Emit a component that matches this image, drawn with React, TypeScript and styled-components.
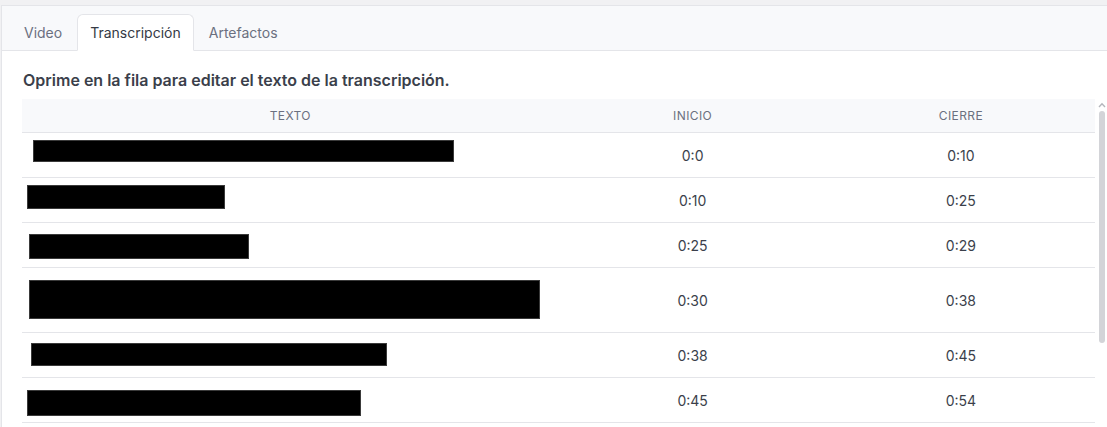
import React from 'react';
import styled, { createGlobalStyle } from 'styled-components';

const GlobalStyle = createGlobalStyle`
  html, body {
    margin: 0;
    padding: 0;
    background: #f1f1f3;
    font-family: Inter, "Noto Sans", "Liberation Sans", sans-serif;
    overflow: hidden;
  }
`;

interface Segment {
  start: string;
  end: string;
  bar: { x: number; y: number; w: number; h: number };
  tall?: boolean;
}

const segments: Segment[] = [
  { start: '0:0', end: '0:10', bar: { x: 11, y: 7, w: 421, h: 22 } },
  { start: '0:10', end: '0:25', bar: { x: 5, y: 7, w: 198, h: 24 } },
  { start: '0:25', end: '0:29', bar: { x: 7, y: 11, w: 220, h: 25 } },
  { start: '0:30', end: '0:38', bar: { x: 7, y: 12, w: 511, h: 39 }, tall: true },
  { start: '0:38', end: '0:45', bar: { x: 9, y: 10, w: 356, h: 23 } },
  { start: '0:45', end: '0:54', bar: { x: 5, y: 12, w: 334, h: 26 } },
];

const Card = styled.div`
  margin: 5px 0 0 1px;
  border-top: 1px solid #e4e5e9;
  border-left: 1px solid #e4e5e9;
  background: #ffffff;
  height: calc(100vh - 6px);
  display: flex;
  flex-direction: column;
`;

const TabBar = styled.div`
  display: flex;
  gap: 2px;
  padding: 8px 9px 0;
  background: #f8f9fb;
  border-bottom: 1px solid #e4e5e9;
`;

const Tab = styled.button<{ $active?: boolean }>`
  height: 37px;
  margin-bottom: -1px;
  padding: 0 12px;
  font-family: inherit;
  font-size: 14px;
  color: ${({ $active }) => ($active ? '#353a45' : '#6b7080')};
  background: ${({ $active }) => ($active ? '#ffffff' : 'transparent')};
  border: 1px solid ${({ $active }) => ($active ? '#e4e5e9' : 'transparent')};
  border-bottom-color: ${({ $active }) => ($active ? '#ffffff' : 'transparent')};
  border-radius: 6px 6px 0 0;
  cursor: pointer;
`;

const Body = styled.div`
  flex: 1;
  min-height: 0;
  padding: 19px 0 0 20px;
  display: flex;
  flex-direction: column;
`;

const Heading = styled.h2`
  margin: 0 0 8px 1px;
  font-size: 16px;
  line-height: 21px;
  font-weight: 600;
  color: #3b3f4b;
`;

const Scroller = styled.div`
  flex: 1;
  min-height: 0;
  display: flex;
  overflow: hidden;
`;

const TableWrap = styled.div`
  flex: 1;
  min-width: 0;
`;

const ScrollTrack = styled.div`
  width: 12px;
  flex-shrink: 0;
  display: flex;
  flex-direction: column;
  align-items: center;
  padding-top: 3px;
  gap: 3px;
`;

const Thumb = styled.div<{ $h: number }>`
  width: 6px;
  height: ${({ $h }) => $h}px;
  margin-left: 2px;
  border-radius: 3px;
  background: #d3d4d8;
`;

const Table = styled.table`
  width: 100%;
  border-collapse: collapse;
  table-layout: fixed;
`;

const HeadCell = styled.th<{ $w: string }>`
  width: ${({ $w }) => $w};
  height: 33px;
  padding: 0;
  background: #f8f9fb;
  border-bottom: 1px solid #e4e5e9;
  font-size: 12px;
  font-weight: 400;
  letter-spacing: 0.4px;
  color: #6b7080;
  text-transform: uppercase;
  text-align: center;
`;

const Row = styled.tr<{ $tall?: boolean }>`
  height: ${({ $tall }) => ($tall ? '65px' : '45px')};
  border-bottom: 1px solid #e4e5e9;
  cursor: pointer;

  &:hover {
    background: #fafafb;
  }
`;

const TextCell = styled.td`
  padding: 0;
  vertical-align: top;
`;

const TimeCell = styled.td`
  padding: 0;
  text-align: center;
  vertical-align: middle;
  font-size: 14px;
  color: #3b3f4b;
`;

const Redacted = styled.span`
  display: block;
  background: #000000;
  border: 1px solid #3a3a3a;
  box-sizing: border-box;
`;

export default function App() {
  return (
    <>
      <GlobalStyle />
      <Card>
        <TabBar>
          <Tab>Video</Tab>
          <Tab $active>Transcripción</Tab>
          <Tab>Artefactos</Tab>
        </TabBar>
        <Body>
          <Heading>Oprime en la fila para editar el texto de la transcripción.</Heading>
          <Scroller>
            <TableWrap>
              <Table>
                <thead>
                  <tr>
                    <HeadCell $w="50%">Texto</HeadCell>
                    <HeadCell $w="25%">Inicio</HeadCell>
                    <HeadCell $w="25%">Cierre</HeadCell>
                  </tr>
                </thead>
                <tbody>
                  {segments.map((s, i) => (
                    <Row key={i} $tall={s.tall}>
                      <TextCell>
                        <Redacted
                          style={{
                            marginLeft: s.bar.x,
                            marginTop: s.bar.y,
                            width: s.bar.w,
                            height: s.bar.h,
                          }}
                        />
                      </TextCell>
                      <TimeCell>{s.start}</TimeCell>
                      <TimeCell>{s.end}</TimeCell>
                    </Row>
                  ))}
                </tbody>
              </Table>
            </TableWrap>
            <ScrollTrack>
              <svg width="8" height="6" viewBox="0 0 8 6" style={{ marginLeft: 2 }}>
                <path d="M1 5 L4 1.8 L7 5" fill="none" stroke="#b4b6bc" strokeWidth="1.4" />
              </svg>
              <Thumb $h={232} />
            </ScrollTrack>
          </Scroller>
        </Body>
      </Card>
    </>
  );
}
